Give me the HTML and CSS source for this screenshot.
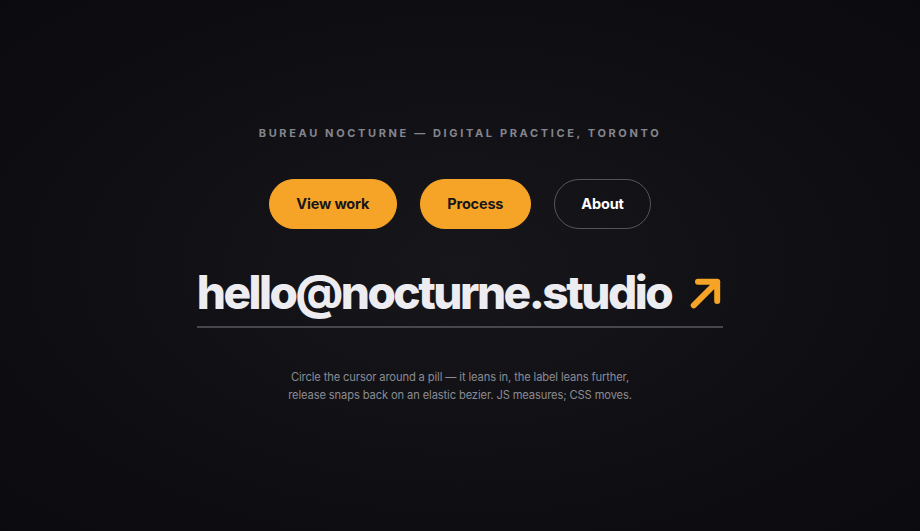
FILE: index.html
```html
<!DOCTYPE html>
<html lang="en">
<head>
<meta charset="utf-8">
<title>Bureau Nocturne</title>
<link rel="stylesheet" href="styles.css">
</head>
<body>
<main class="stage">
  <p class="eyebrow">Bureau Nocturne — Digital Practice, Toronto</p>
  <nav class="pills">
    <a class="pill pill--solid" href="#">View work</a>
    <a class="pill pill--solid" href="#">Process</a>
    <a class="pill pill--ghost" href="#">About</a>
  </nav>
  <a class="mail" href="#">
    <span class="mail__text">hello@nocturne.studio</span>
    <svg class="mail__arrow" viewBox="0 0 30 30" aria-hidden="true">
      <path d="M3.5 26.5 L25.5 4.5 M7.5 4.5 H25.5 V22.5" fill="none" stroke="currentColor" stroke-width="5.6" stroke-linecap="round" stroke-linejoin="round"/>
    </svg>
  </a>
  <p class="note">Circle the cursor around a pill — it leans in, the label leans further,<br>release snaps back on an elastic bezier. JS measures; CSS moves.</p>
</main>
</body>
</html>
```

FILE: styles.css
```css
html, body {
  margin: 0;
  height: 100%;
}
body {
  background: radial-gradient(ellipse at 50% 50%, #16161b 0%, #111115 45%, #0b0b0f 100%);
  color: #ececf1;
  font-family: Inter, "Liberation Sans", sans-serif;
}
.stage {
  min-height: 100vh;
  display: flex;
  flex-direction: column;
  align-items: center;
  justify-content: center;
  box-sizing: border-box;
  padding-bottom: 2px;
}
.eyebrow {
  margin: 0;
  font-size: 11px;
  font-weight: 700;
  letter-spacing: 0.24em;
  text-transform: uppercase;
  color: #85858e;
  line-height: 14px;
}
.pills {
  display: flex;
  gap: 23px;
  margin-top: 39px;
}
.pill {
  display: block;
  text-decoration: none;
  font-size: 14.5px;
  font-weight: 700;
  letter-spacing: -0.012em;
  line-height: 18px;
  padding: 15px 26.5px;
  border-radius: 999px;
}
.pill--solid {
  background: #f6a428;
  color: #17161a;
  border: 1px solid #f6a428;
}
.pill--ghost {
  color: #ffffff;
  border: 1px solid rgba(255, 255, 255, 0.28);
}
.mail {
  display: flex;
  align-items: center;
  gap: 19px;
  margin-top: 38px;
  padding-bottom: 9px;
  border-bottom: 2px solid #46464d;
  text-decoration: none;
  color: #ececf1;
}
.mail__text {
  font-size: 46px;
  font-weight: 800;
  letter-spacing: -0.055em;
  line-height: 50px;
}
.mail__arrow {
  width: 32px;
  height: 32px;
  color: #f6a428;
  margin-right: 1px;
  margin-top: 3px;
}
.note {
  margin: 40px 0 0;
  font-size: 11.15px;
  letter-spacing: -0.01em;
  line-height: 18px;
  color: #8b8b94;
  text-align: center;
}
```
